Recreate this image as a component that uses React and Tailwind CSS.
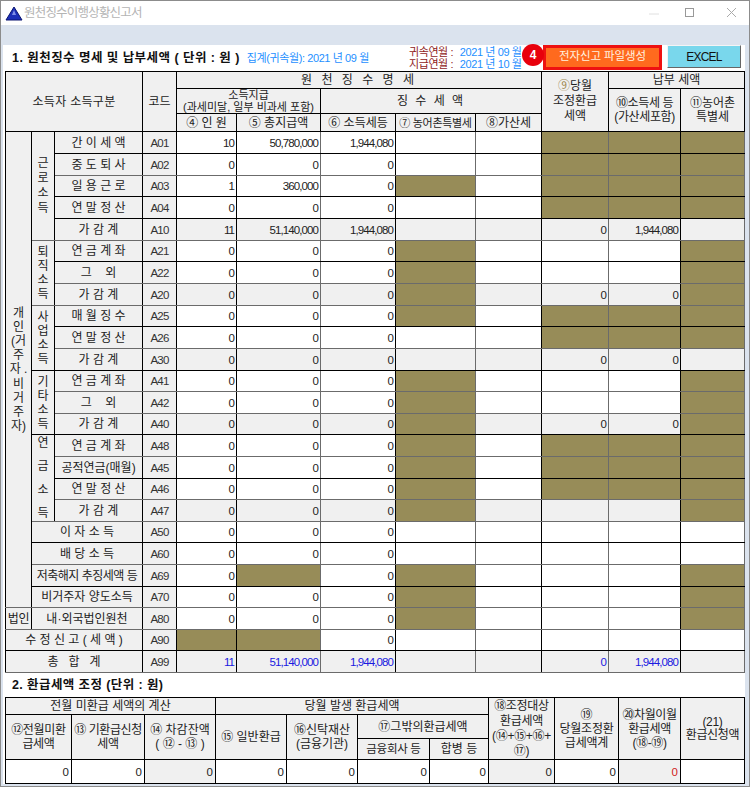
const B = 'B';
const K = 'border-b-black';
const G = 'border-b-[#6b6b6b]';
const H22 = 'h-[22px]';
const H21 = 'h-[21px]';

const valueCols = [
  'border-r-black',
  'border-r-[#6b6b6b]',
  'border-r-black',
  'border-r-[#6b6b6b]',
  'border-r-black',
  'border-r-[#6b6b6b]',
  'border-r-black',
  'border-r-[#6b6b6b]',
];

const rows = [
  { code: 'A01', label: '간 이 세 액', h: H22, line: K, vals: ['10', '50,780,000', '1,944,080', '', '', B, B, B] },
  { code: 'A02', label: '중 도 퇴 사', h: H22, line: G, vals: ['0', '0', '0', '', '', B, B, B] },
  { code: 'A03', label: '일 용 근 로', h: H21, line: K, vals: ['1', '360,000', '0', B, '', B, B, B] },
  { code: 'A04', label: '연 말 정 산', h: H22, line: K, vals: ['0', '0', '0', '', '', B, B, B] },
  { code: 'A10', label: '가 감 계', h: H22, line: G, sum: true, vals: ['11', '51,140,000', '1,944,080', '', '', '0', '1,944,080', ''] },
  { code: 'A21', label: '연 금 계 좌', h: H21, line: K, vals: ['0', '0', '0', B, '', '', '', B] },
  { code: 'A22', label: '그    외', h: H22, line: G, vals: ['0', '0', '0', B, '', '', '', B] },
  { code: 'A20', label: '가 감 계', h: H22, line: G, sum: true, vals: ['0', '0', '0', B, '', '0', '0', B] },
  { code: 'A25', label: '매 월 징 수', h: H21, line: K, vals: ['0', '0', '0', B, '', B, B, B] },
  { code: 'A26', label: '연 말 정 산', h: H22, line: G, vals: ['0', '0', '0', '', '', B, B, B] },
  { code: 'A30', label: '가 감 계', h: H22, line: K, sum: true, vals: ['0', '0', '0', '', '', '0', '0', ''] },
  { code: 'A41', label: '연 금 계 좌', h: H21, line: G, vals: ['0', '0', '0', B, '', '', '', B] },
  { code: 'A42', label: '그    외', h: H22, line: G, vals: ['0', '0', '0', B, '', '', '', B] },
  { code: 'A40', label: '가 감 계', h: H21, line: K, sum: true, vals: ['0', '0', '0', B, '', '0', '0', B] },
  { code: 'A48', label: '연 금 계 좌', h: H22, line: G, vals: ['0', '0', '0', B, '', B, B, B] },
  { code: 'A45', label: '공적연금(매월)', h: H22, line: K, vals: ['0', '0', '0', B, '', B, B, B] },
  { code: 'A46', label: '연 말 정 산', h: H21, line: G, vals: ['0', '0', '0', B, '', B, B, B] },
  { code: 'A47', label: '가 감 계', h: H22, line: G, sum: true, vals: ['0', '0', '0', B, '', '', '', B] },
  { code: 'A50', label: '이 자 소 득', wide: true, h: H21, line: K, vals: ['0', '0', '0', '', '', '', '', ''] },
  { code: 'A60', label: '배 당 소 득', wide: true, h: H22, line: G, vals: ['0', '0', '0', '', '', '', '', ''] },
  { code: 'A69', label: '저축해지 추징세액 등', wide: true, tight: true, h: H22, line: K, vals: ['0', B, '0', B, '', '', '', B] },
  { code: 'A70', label: '비거주자 양도소득', wide: true, h: H21, line: G, vals: ['0', '0', '0', B, '', '', '', B] },
  { code: 'A80', label: '내·외국법인원천', wide: true, h: H22, line: G, vals: ['0', '0', '0', B, '', '', '', B] },
  { code: 'A90', label: '수 정 신 고 ( 세 액 )', full: true, h: H21, line: K, vals: [B, B, '0', '', '', '', '', ''] },
  { code: 'A99', label: '총   합   계', full: true, h: H22, line: G, sum: true, blue: true, vals: ['11', '51,140,000', '1,944,080', '', '', '0', '1,944,080', ''] },
];

const groups = {
  0: { text: ['근', '로', '소', '득'], span: 5, line: G, gap: 'leading-[15px]' },
  5: { text: ['퇴', '직', '소', '득'], span: 3, line: G, gap: 'leading-[14px]' },
  8: { text: ['사', '업', '소', '득'], span: 3, line: K, gap: 'leading-[14px]' },
  11: { text: ['기', '타', '소', '득'], span: 3, line: K, gap: 'leading-[14px]' },
  14: { text: ['연', '금', '소', '득'], span: 4, line: G, gap: 'flex h-[84px] flex-col justify-between leading-[14px]' },
};

const head = 'border border-black bg-[#f0f0f0] p-0 text-center align-middle font-normal whitespace-pre';

function Lines({ items, className }) {
  return (
    <div className={className}>
      {items.map((t, i) => (
        <div key={i}>{t}</div>
      ))}
    </div>
  );
}

function ValueCell({ value, row, index }) {
  const edge = `${valueCols[index]} ${row.line}`;
  if (value === B) {
    return <td className={`border border-black bg-[#978c58] p-0 ${edge}`} />;
  }
  return (
    <td className={`border border-black p-0 pr-[2px] text-right align-middle text-[11.5px] tracking-[-0.9px] ${row.sum ? 'bg-[#f0f0f0]' : 'bg-white'} ${row.blue ? 'text-[#1a1ae0]' : ''} ${edge}`}>
      {value}
    </td>
  );
}

function MainTable() {
  return (
    <table className="w-[739px] table-fixed border-collapse text-[12px] leading-[14px] text-[#222]">
      <colgroup>
        <col className="w-[26px]" />
        <col className="w-[23px]" />
        <col className="w-[88px]" />
        <col className="w-[34px]" />
        <col className="w-[60px]" />
        <col className="w-[84px]" />
        <col className="w-[75px]" />
        <col className="w-[80px]" />
        <col className="w-[66px]" />
        <col className="w-[67px]" />
        <col className="w-[72px]" />
        <col className="w-[64px]" />
      </colgroup>
      <thead>
        <tr className="h-[17px]">
          <th colSpan={3} rowSpan={3} className={`${head} tracking-[0.3px]`}>소득자 소득구분</th>
          <th rowSpan={3} className={head}>코드</th>
          <th colSpan={5} className={`${head} tracking-[3px]`}>원 천 징 수 명 세</th>
          <th rowSpan={3} className={`${head} leading-[15px]`}>
            <Lines items={[<span key="a"><span className="text-[#a08a50]">⑨</span>당월</span>, '조정환급', '세액']} />
          </th>
          <th colSpan={2} className={head}>납부 세액</th>
        </tr>
        <tr className="h-[25px]">
          <th colSpan={2} className={`${head} text-[11px] leading-[12px]`}>
            <Lines items={['소득지급', '(과세미달, 일부 비과세 포함)']} />
          </th>
          <th colSpan={3} className={`${head} tracking-[2px]`}>징 수 세 액</th>
          <th rowSpan={2} className={`${head} leading-[14px] tracking-[-0.4px]`}>
            <Lines items={['⑩소득세 등', '(가산세포함)']} />
          </th>
          <th rowSpan={2} className={`${head} leading-[14px]`}>
            <Lines items={['⑪농어촌', '특별세']} />
          </th>
        </tr>
        <tr className="h-[18px]">
          <th className={head}>④ 인 원</th>
          <th className={head}>⑤ 총지급액</th>
          <th className={head}>⑥ 소득세등</th>
          <th className={`${head} text-[11px] tracking-[-0.3px]`}>⑦ 농어촌특별세</th>
          <th className={head}>⑧가산세</th>
        </tr>
      </thead>
      <tbody>
        {rows.map((row, i) => (
          <tr key={row.code} className={row.h}>
            {i === 0 && (
              <td rowSpan={22} className={`${head} border-b-[#6b6b6b]`}>
                <Lines items={['개', '인', '(거', '주', '자 .', '비', '거', '주', '자)']} className="leading-[14.2px]" />
              </td>
            )}
            {row.code === 'A80' && <td className={`${head} ${row.line} tracking-[-0.4px]`}>법인</td>}
            {groups[i] && (
              <td rowSpan={groups[i].span} className={`${head} ${groups[i].line}`}>
                <Lines items={groups[i].text} className={groups[i].gap} />
              </td>
            )}
            <td
              colSpan={row.full ? 3 : row.wide ? 2 : 1}
              className={`${head} ${row.line} ${row.tight ? 'tracking-[-0.5px]' : ''}`}
            >
              {row.label}
            </td>
            <td className={`${head} ${row.line} text-[11.5px] tracking-[-0.8px] text-[#333]`}>{row.code}</td>
            {row.vals.map((v, k) => (
              <ValueCell key={k} value={v} row={row} index={k} />
            ))}
          </tr>
        ))}
      </tbody>
    </table>
  );
}

function RefundTable() {
  const num = 'border border-black p-0 pr-[2px] text-right align-middle text-[11.5px]';
  return (
    <table className="w-[739px] table-fixed border-collapse text-[12px] leading-[14px] text-[#222]">
      <colgroup>
        <col className="w-[66px]" />
        <col className="w-[73px]" />
        <col className="w-[71px]" />
        <col className="w-[71px]" />
        <col className="w-[71px]" />
        <col className="w-[72px]" />
        <col className="w-[59px]" />
        <col className="w-[66px]" />
        <col className="w-[64px]" />
        <col className="w-[62px]" />
        <col className="w-[64px]" />
      </colgroup>
      <thead>
        <tr className="h-[17px]">
          <th colSpan={3} className={head}>전월 미환급 세액의 계산</th>
          <th colSpan={4} className={head}>당월 발생 환급세액</th>
          <th rowSpan={3} className={head}>
            <Lines items={['⑱조정대상', '환급세액', '(⑭+⑮+⑯+', '⑰)']} className="leading-[15px] tracking-[-0.3px]" />
          </th>
          <th rowSpan={3} className={head}>
            <Lines items={['⑲', '당월조정환', '급세액계']} className="leading-[14px] tracking-[-0.2px]" />
          </th>
          <th rowSpan={3} className={head}>
            <Lines items={['⑳차월이월', '환급세액', '(⑱-⑲)']} className="leading-[14px] tracking-[-0.4px]" />
          </th>
          <th rowSpan={3} className={head}>
            <Lines items={['(21)', '환급신청액']} className="leading-[13px] tracking-[-0.3px]" />
          </th>
        </tr>
        <tr className="h-[24px]">
          <th rowSpan={2} className={head}>
            <Lines items={['⑫전월미환', '급세액']} className="leading-[14px] tracking-[-0.3px]" />
          </th>
          <th rowSpan={2} className={head}>
            <Lines items={['⑬ 기환급신청', '세액']} className="leading-[14px] tracking-[-0.4px]" />
          </th>
          <th rowSpan={2} className={head}>
            <Lines items={['⑭ 차감잔액', '( ⑫ - ⑬ )']} className="leading-[14px]" />
          </th>
          <th rowSpan={2} className={head}>⑮ 일반환급</th>
          <th rowSpan={2} className={head}>
            <Lines items={['⑯신탁재산', '(금융기관)']} className="leading-[14px]" />
          </th>
          <th colSpan={2} className={head}>⑰그밖의환급세액</th>
        </tr>
        <tr className="h-[21px]">
          <th className={`${head} text-[11.5px] tracking-[-0.3px]`}>금융회사 등</th>
          <th className={head}>합병 등</th>
        </tr>
      </thead>
      <tbody>
        <tr className="h-[24px]">
          <td className={`${num} bg-white`}>0</td>
          <td className={`${num} bg-white`}>0</td>
          <td className={`${num} bg-[#f0f0f0]`}>0</td>
          <td className={`${num} bg-white`}>0</td>
          <td className={`${num} bg-white`}>0</td>
          <td className={`${num} bg-white`}>0</td>
          <td className={`${num} bg-white`}>0</td>
          <td className={`${num} bg-[#f0f0f0]`}>0</td>
          <td className={`${num} bg-white`}>0</td>
          <td className={`${num} bg-[#f0f0f0] text-[#d02020]`}>0</td>
          <td className={`${num} bg-white`} />
        </tr>
      </tbody>
    </table>
  );
}

export default function App() {
  return (
    <div className="flex h-[787px] w-[750px] flex-col overflow-hidden border border-[#8c8c8c] bg-[#dbe3ee] font-['Liberation_Sans','Noto_Sans_CJK_KR',sans-serif]">
      <div className="flex h-[24px] shrink-0 items-center bg-white pl-[4px]">
        <svg width="18" height="15" viewBox="0 0 18 15">
          <path d="M9 1 L17 14 H1 Z" fill="#1c2fb8" stroke="#0a1470" strokeWidth="1" />
          <path d="M9 4 L11 9 H7 Z" fill="#7f8fe8" />
        </svg>
        <span className="ml-[1px] text-[12.5px] tracking-[-0.8px] text-[#b4b4b4]">원천징수이행상황신고서</span>
        <svg className="ml-auto" width="100" height="12" viewBox="0 0 100 12">
          <path d="M0 7 H10" stroke="#e0e0e0" strokeWidth="1" />
          <rect x="36.5" y="1.5" width="8" height="8" fill="none" stroke="#999" strokeWidth="1" />
          <path d="M78 1 L87 10 M87 1 L78 10" stroke="#aaa" strokeWidth="1" />
        </svg>
      </div>

      <div className="mt-[20px] mr-[4px] mb-[3px] ml-[2px] flex-1 bg-white pl-[1px]">
        <div className="relative flex h-[26px] items-center">
          <span className="ml-[8px] text-[12.5px] font-bold tracking-[0.45px] whitespace-pre text-[#111]">1. 원천징수 명세 및 납부세액 ( 단위 : 원 )</span>
          <span className="ml-[7px] text-[11px] tracking-[-0.4px] whitespace-pre text-[#1e8fff]">집계(귀속월): 2021 년 09 월</span>
          <div className="ml-[40px] flex flex-col text-[11px] leading-[12px] tracking-[-0.4px] whitespace-pre">
            <div>
              <span className="text-[#8f1c1c]">귀속연월 : </span>
              <span className="ml-[4px] text-[#1e8fff]">2021 년 09 월</span>
            </div>
            <div>
              <span className="text-[#8f1c1c]">지급연월 : </span>
              <span className="ml-[4px] text-[#1e8fff]">2021 년 10 월</span>
            </div>
          </div>
          <span className="absolute top-[-1px] left-[518px] flex h-[22px] w-[22px] items-center justify-center rounded-full bg-[#e8000c] text-[12px] font-bold text-white">4</span>
          <button className="mb-[2px] ml-auto h-[25px] w-[119px] border-[3px] border-[#ee1111] bg-[#ff6a1e] text-[11.5px] tracking-[-0.1px] text-[#fff2e0]">전자신고 파일생성</button>
          <button className="mr-[4px] mb-[3px] ml-[5px] h-[23px] w-[74px] border border-[#f4f4f4] border-r-[#666] border-b-[#666] bg-[#79d7ec] text-[12px] tracking-[-0.8px] text-[#111]">EXCEL</button>
        </div>

        <div className="ml-[1px]">
          <MainTable />
        </div>

        <div className="flex h-[24px] items-center pl-[8px] text-[12.5px] font-bold tracking-[0.4px] whitespace-pre text-[#111]">2. 환급세액 조정 (단위 : 원)</div>

        <div className="ml-[1px]">
          <RefundTable />
        </div>
      </div>
    </div>
  );
}
